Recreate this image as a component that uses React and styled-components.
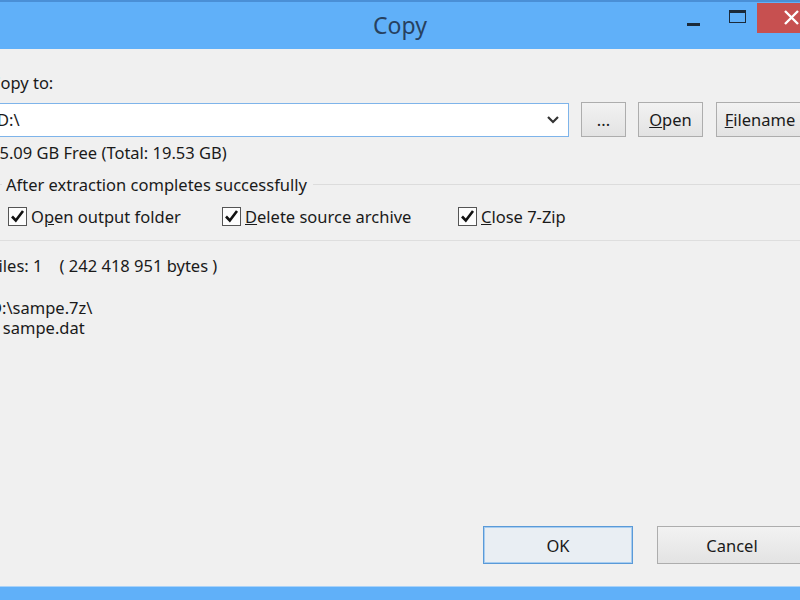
import React from "react";
import styled, { createGlobalStyle } from "styled-components";

const GlobalStyle = createGlobalStyle`
  html, body {
    margin: 0;
    padding: 0;
    background: #f0f0f0;
    overflow: hidden;
  }
`;

// WINDOW
const Window = styled.div`
  width: 800px;
  height: 600px;
  display: flex;
  flex-direction: column;
  font-family: "Noto Sans", "Open Sans", sans-serif;
  font-size: 16.5px;
  color: #1a1a1a;
  background: #f0f0f0;
  overflow: hidden;
`;

// TITLE BAR
const TitleBar = styled.div`
  height: 47px;
  flex-shrink: 0;
  border-top: 2px solid #4a8fd6;
  background: #60b0f9;
  display: grid;
  grid-template-columns: 1fr auto 1fr;
  align-items: start;
`;

const Title = styled.div`
  grid-column: 2;
  font-size: 23px;
  line-height: 46px;
  color: #27415f;
`;

const Controls = styled.div`
  grid-column: 3;
  justify-self: end;
  display: flex;
  align-items: flex-start;
  height: 100%;
`;

const ControlButton = styled.div`
  width: ${(p) => p.w}px;
  height: 30px;
  margin-top: 1px;
  display: flex;
  align-items: center;
  justify-content: center;
  background: ${(p) => p.bg || "transparent"};
  overflow: hidden;
`;

const MinIcon = styled.div`
  width: 13px;
  height: 3px;
  margin-top: 12px;
  margin-left: -8px;
  background: #1b2a3a;
`;

const MaxIcon = styled.div`
  width: 15px;
  height: 9px;
  margin-top: -3px;
  border: 1.5px solid #1b2a3a;
  border-top-width: 3px;
`;

// BODY
const Body = styled.div`
  flex: 1;
  display: flex;
  flex-direction: column;
  margin-left: -10px;
`;

const Label = styled.div`
  line-height: 20px;
  margin-top: ${(p) => p.mt || 0}px;
  white-space: pre;
`;

const PathRow = styled.div`
  display: flex;
  align-items: center;
  margin-top: 9px;
`;

const Combo = styled.div`
  width: 579px;
  height: 34px;
  flex-shrink: 0;
  box-sizing: border-box;
  border: 1px solid #7eb4ea;
  background: #fff;
  display: flex;
  align-items: center;
  justify-content: space-between;
  padding: 0 8px 0 6px;
`;

const Button = styled.div`
  height: 35px;
  box-sizing: border-box;
  border: 1px solid #adadad;
  background: linear-gradient(#f2f2f2, #e3e3e3);
  display: flex;
  align-items: center;
  justify-content: center;
  width: ${(p) => p.w}px;
  margin-left: ${(p) => p.ml || 0}px;
  flex-shrink: 0;
`;

const GroupHead = styled.div`
  display: flex;
  align-items: center;
  margin-top: 11px;
  height: 20px;
  &::before {
    content: "";
    width: 12px;
    border-top: 1px solid #dcdcdc;
  }
  &::after {
    content: "";
    flex: 1;
    border-top: 1px solid #dcdcdc;
    margin-left: 6px;
  }
`;

const GroupLabel = styled.span`
  padding-left: 4px;
`;

const CheckRow = styled.div`
  display: flex;
  align-items: center;
  height: 22px;
  margin-top: 11px;
  padding-left: 18px;
  padding-bottom: 13px;
  border-bottom: 1px solid #dedede;
`;

const Check = styled.label`
  display: flex;
  align-items: center;
  width: ${(p) => p.w}px;
  flex-shrink: 0;
`;

const Box = styled.span`
  width: 19px;
  height: 19px;
  box-sizing: border-box;
  border: 1px solid #555;
  background: #fdfdfd;
  display: flex;
  align-items: center;
  justify-content: center;
  margin-right: 4px;
`;

// FOOTER
const Footer = styled.div`
  display: flex;
  justify-content: flex-end;
  gap: 24px;
  padding-bottom: 22px;
  margin-right: -7px;
`;

const DialogButton = styled.div`
  width: 150px;
  height: 38px;
  flex-shrink: 0;
  box-sizing: border-box;
  border: 1px solid ${(p) => (p.primary ? "#5a9ad8" : "#adadad")};
  box-shadow: ${(p) => (p.primary ? "inset 0 0 0 1px #a8cdf0" : "none")};
  background: ${(p) => (p.primary ? "#e9eef3" : "linear-gradient(#f2f2f2, #e3e3e3)")};
  display: flex;
  align-items: center;
  justify-content: center;
`;

const BottomBar = styled.div`
  height: 13px;
  flex-shrink: 0;
  border-top: 1px solid #a9d2f8;
  background: #60b0f9;
`;

const Tick = () => (
  <svg width="15" height="14" viewBox="0 0 15 14">
    <path d="M2 7.5 L5.8 11.5 L13 2" fill="none" stroke="#111" strokeWidth="2.6" />
  </svg>
);

const CheckItem = ({ w, children }) => (
  <Check w={w}>
    <Box>
      <Tick />
    </Box>
    {children}
  </Check>
);

export default function App() {
  return (
    <Window>
      <GlobalStyle />
      <TitleBar>
        <Title>Copy</Title>
        <Controls>
          <ControlButton w={40}>
            <MinIcon />
          </ControlButton>
          <ControlButton w={40}>
            <MaxIcon />
          </ControlButton>
          <ControlButton w={43} bg="#c75050">
            <svg width="43" height="30" viewBox="0 0 43 30">
              <path d="M28 8 L41 21 M41 8 L28 21" stroke="#fff" strokeWidth="2.4" />
            </svg>
          </ControlButton>
        </Controls>
      </TitleBar>

      <Body>
        <Label mt={24}>Copy to:</Label>
        <PathRow>
          <Combo>
            <span>D:\</span>
            <svg width="14" height="10" viewBox="0 0 14 10">
              <path d="M2 2 L7 7 L12 2" fill="none" stroke="#333" strokeWidth="2.2" />
            </svg>
          </Combo>
          <Button w={45} ml={12}>...</Button>
          <Button w={65} ml={12}>
            <span><u>O</u>pen</span>
          </Button>
          <Button w={88} ml={13}>
            <span><u>F</u>ilename</span>
          </Button>
        </PathRow>
        <Label mt={6}>15.09 GB Free (Total: 19.53 GB)</Label>
        <GroupHead>
          <GroupLabel>After extraction completes successfully</GroupLabel>
        </GroupHead>
        <CheckRow>
          <CheckItem w={214}>
            <span>O<u>p</u>en output folder</span>
          </CheckItem>
          <CheckItem w={236}>
            <span><u>D</u>elete source archive</span>
          </CheckItem>
          <CheckItem w={150}>
            <span><u>C</u>lose 7-Zip</span>
          </CheckItem>
        </CheckRow>
        <Label mt={15}>{"Files: 1    ( 242 418 951 bytes )"}</Label>
        <Label mt={22}>D:\sampe.7z\</Label>
        <Label>{"   sampe.dat"}</Label>
      </Body>

      <Footer>
        <DialogButton primary>OK</DialogButton>
        <DialogButton>Cancel</DialogButton>
      </Footer>
      <BottomBar />
    </Window>
  );
}
